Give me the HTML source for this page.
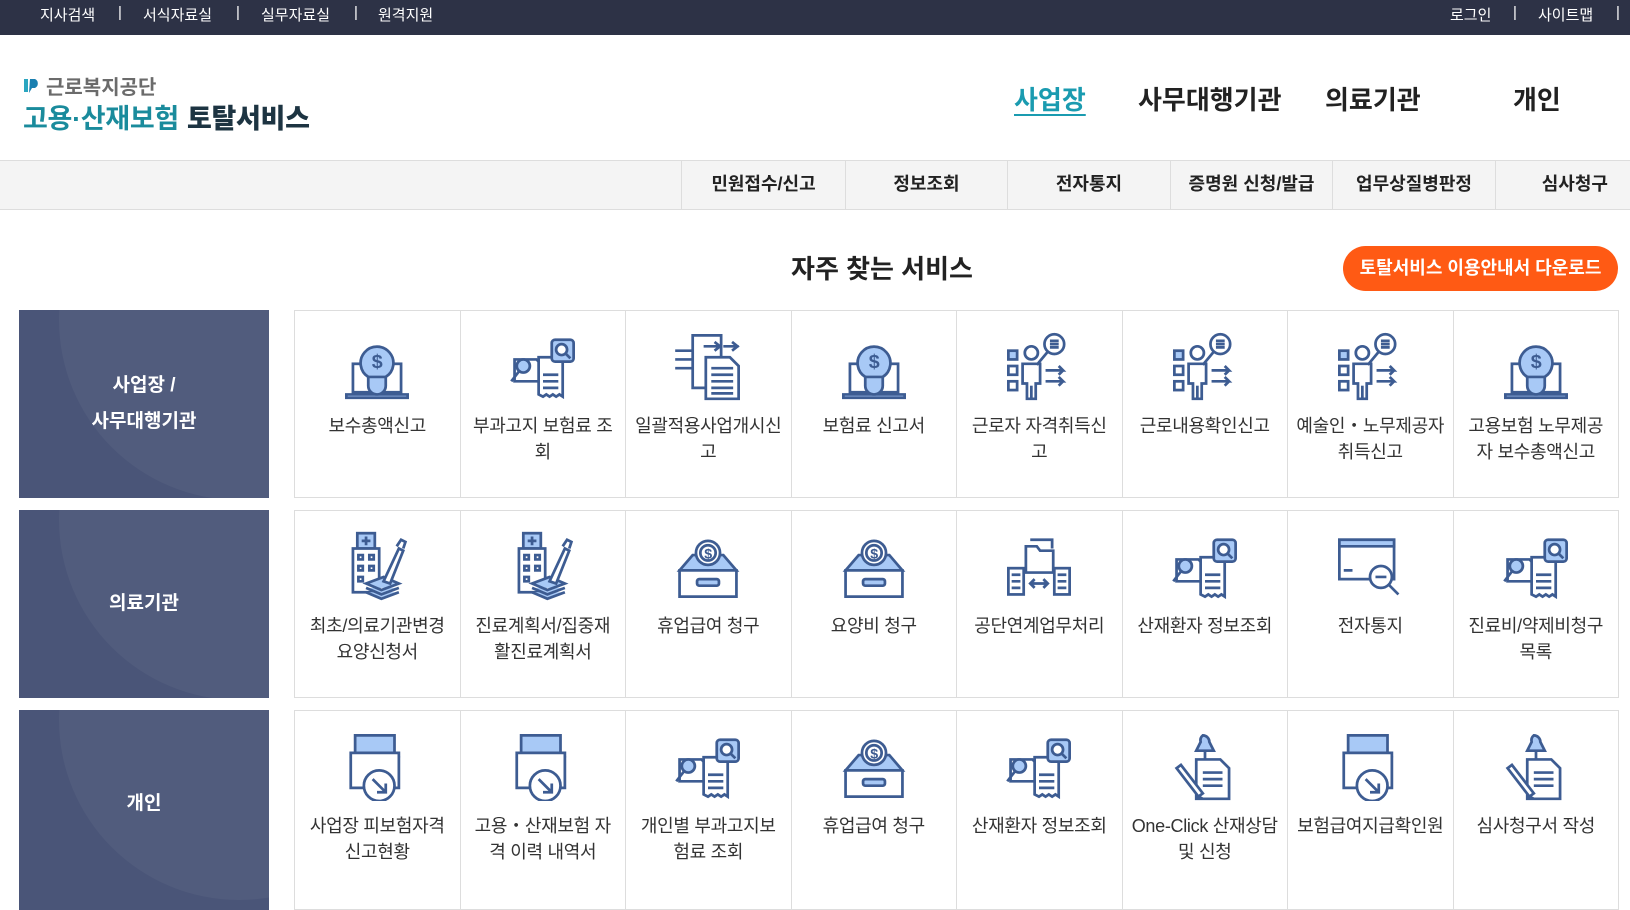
<!DOCTYPE html>
<html><head><meta charset="utf-8">
<style>
*{margin:0;padding:0;box-sizing:border-box}
body{width:1630px;height:868px;overflow:hidden;background:#fff;font-family:"Liberation Sans","Noto Sans CJK KR",sans-serif;color:#333;position:relative}
.top{position:absolute;left:0;top:0;width:1630px;height:35px;background:#2d3246;color:#fff;font-size:15px}
.top span{position:absolute;top:4px}
.logo1{position:absolute;left:46px;top:71px;font-size:20px;font-weight:bold;color:#6b6b6b}
.logo2{position:absolute;left:23px;top:97px;font-size:27px;font-weight:bold;color:#1a8b9c;letter-spacing:-0.3px}
.logo2 b{color:#1d3442;margin-left:8px}
.nav{position:absolute;top:80px;font-size:26px;font-weight:bold;color:#222}
.sub{position:absolute;left:0;top:160px;width:1630px;height:50px;background:#f4f4f4;border-top:1px solid #ddd;border-bottom:1px solid #ddd}
.sub div{position:absolute;top:0;height:48px;line-height:46px;text-align:center;font-size:18px;font-weight:bold;color:#222;border-left:1px solid #ddd}
.title{position:absolute;left:0;width:1764px;text-align:center;top:249px;font-size:26px;font-weight:bold;color:#222}
.btn{position:absolute;left:1343px;top:246px;width:275px;height:45px;border-radius:23px;background:#ff5a14;color:#fff;font-size:18px;font-weight:bold;line-height:45px;text-align:center}
.panel{position:absolute;left:19px;width:250px;height:188px;background:#4a5578;overflow:hidden;color:#fff;font-size:19px;font-weight:bold;text-align:center;display:flex;align-items:center;justify-content:center;line-height:36px}
.panel:before{content:"";position:absolute;left:40px;top:-170px;width:360px;height:360px;border-radius:50%;background:rgba(255,255,255,0.045)}
.panel span{position:relative}
.grid{position:absolute;left:294px;width:1325px;height:188px;border:1px solid #ddd;display:flex}
.cell{flex:1;border-right:1px solid #ddd;text-align:center;padding-top:20px;font-size:18px;line-height:26px;color:#333;letter-spacing:-0.3px}
.cell:last-child{border-right:none}
.cell svg{display:block;margin:0 auto 12px;width:70px;height:70px}
</style></head><body>
<svg width="0" height="0" style="position:absolute">
<defs>
<g id="i1" fill="none" stroke="#3d5c92" stroke-width="2.5"><rect x="10" y="30" width="44" height="26" fill="#fff"/><path d="M4 58h56v3H4z" fill="#a8c9f6"/><path d="M24 42a15 15 0 1 1 16 0v8a8 8 0 0 1-16 0z" fill="#a8c9f6"/><path d="M24 42h16"/><text x="32" y="34" font-size="18" font-weight="bold" text-anchor="middle" fill="#3d5c92" stroke="none">$</text></g>
<g id="i2" fill="none" stroke="#3d5c92" stroke-width="2.5"><path d="M6 26h20l4 4v16H6z" fill="#fff"/><circle cx="14" cy="32" r="6" fill="#a8c9f6"/><path d="M10 37L3 46"/><path d="M28 24h22v36l-3-2-3 2-3-2-3 2-3-2-3 2-4-2z" fill="#fff"/><path d="M32 40h14M32 46h14M32 52h14"/><rect x="40" y="8" width="20" height="20" rx="3" fill="#a8c9f6"/><circle cx="49" cy="17" r="5" fill="#fff"/><path d="M53 21l4 4"/></g>
<g id="i3" fill="none" stroke="#3d5c92" stroke-width="2.5"><path d="M18 4h26v48H18z" fill="#fff"/><path d="M2 18h16M2 26h16M2 34h16M28 14h16M38 10l5 4-5 4M46 14h14M54 10l5 4-5 4"/><path d="M30 24h22l8 8v30H30z" fill="#fff"/><path d="M35 34h20M35 40h20M35 46h20M35 52h20M35 57h20"/></g>
<g id="i4" fill="none" stroke="#3d5c92" stroke-width="2.5"><rect x="4" y="18" width="8" height="8" fill="#a8c9f6"/><rect x="4" y="32" width="8" height="8"/><rect x="4" y="46" width="8" height="8"/><circle cx="25" cy="20" r="6"/><path d="M17 30h16v18h-4v14h-8V48h-4z"/><path d="M25 50v12"/><circle cx="46" cy="12" r="9"/><path d="M42 9h8M42 12h8M42 15h8M40 19l-10 12"/><path d="M38 36h16l-4-4M54 36l-4 4M38 46h16l-4-4M54 46l-4 4"/></g>
<g id="i5" fill="none" stroke="#3d5c92" stroke-width="2.5"><rect x="14" y="2" width="16" height="14" fill="#a8c9f6"/><path d="M22 5v8M18 9h8"/><rect x="10" y="16" width="24" height="40" fill="#fff"/><path d="M15 22h4v4h-4zM25 22h4v4h-4zM15 32h4v4h-4zM25 32h4v4h-4zM15 42h4v4h-4z"/><path d="M22 48l16-6 14 6-16 6zM22 52l14 6 16-6M22 56l14 6 16-6" fill="#a8c9f6"/><path d="M38 46l14-30 4 2-12 30z" fill="#fff"/><path d="M50 14l4-6 4 2-2 6"/></g>
<g id="i6" fill="none" stroke="#3d5c92" stroke-width="2.5"><path d="M6 36l12-14h28l12 14z" fill="#a8c9f6"/><circle cx="32" cy="20" r="11" fill="#fff"/><circle cx="32" cy="20" r="7"/><text x="32" y="25" font-size="13" font-weight="bold" text-anchor="middle" fill="#3d5c92" stroke="none">$</text><rect x="6" y="36" width="52" height="24" fill="#fff"/><rect x="22" y="44" width="20" height="6" rx="2" fill="#a8c9f6"/></g>
<g id="i7" fill="none" stroke="#3d5c92" stroke-width="2.5"><path d="M20 14h10l3 4h12v20H20z" fill="#fff"/><path d="M24 8h20v8"/><rect x="4" y="34" width="14" height="24" fill="#fff"/><rect x="46" y="34" width="14" height="24" fill="#fff"/><path d="M7 40h8M7 46h8M7 52h8M49 40h8M49 46h8M49 52h8"/><path d="M24 48h16M28 44l-4 4 4 4M36 44l4 4-4 4" fill="#a8c9f6"/></g>
<g id="i8" fill="none" stroke="#3d5c92" stroke-width="2.5"><rect x="4" y="8" width="50" height="36" fill="#fff"/><path d="M4 8h50v6H4z" fill="#a8c9f6"/><path d="M8 36h8"/><circle cx="42" cy="42" r="10" fill="#fff"/><path d="M37 42h10M49 49l9 9"/></g>
<g id="i9" fill="none" stroke="#3d5c92" stroke-width="2.5"><rect x="12" y="4" width="36" height="24" fill="#a8c9f6"/><path d="M8 24a3 3 0 0 1 6 0M46 24a3 3 0 0 1 6 0"/><path d="M8 20h44v32H8z" fill="#fff"/><circle cx="34" cy="50" r="14" fill="#fff"/><path d="M28 44l12 12M40 48v8h-8"/></g>
<g id="i10" fill="none" stroke="#3d5c92" stroke-width="2.5"><path d="M30 4a6 6 0 0 1 6 6l4 8H24l4-8a6 6 0 0 1 2-6z" fill="#a8c9f6"/><path d="M32 18v14"/><path d="M24 26h22l8 8v28H24z" fill="#fff"/><path d="M30 38h18M30 44h18M30 50h18"/><path d="M6 34l4-3 20 26-4 3z" fill="#fff"/><path d="M26 60l4 2"/></g>
</defs></svg>

<div class="top">
<span style="left:40px">지사검색</span><span style="left:118px">|</span>
<span style="left:143px">서식자료실</span><span style="left:236px">|</span>
<span style="left:261px">실무자료실</span><span style="left:354px">|</span>
<span style="left:378px">원격지원</span>
<span style="left:1450px">로그인</span><span style="left:1513px">|</span>
<span style="left:1538px">사이트맵</span><span style="left:1616px">|</span>
</div>

<svg style="position:absolute;left:23px;top:77px" width="18" height="17" viewBox="0 0 18 17"><path d="M1 2h4v13H1z" fill="#2aa6c0"/><path d="M7 2h5a5 5 0 0 1 0 9H9l-3 5z" fill="#1a7fb0"/></svg>
<div class="logo1">근로복지공단</div>
<div class="logo2">고용·산재보험<b>토탈서비스</b></div>

<div class="nav" style="left:1014px;color:#1a9bb0;text-decoration:underline;text-underline-offset:5px">사업장</div>
<div class="nav" style="left:1138px">사무대행기관</div>
<div class="nav" style="left:1325px">의료기관</div>
<div class="nav" style="left:1513px">개인</div>

<div class="sub">
<div style="left:681px;width:164px">민원접수/신고</div>
<div style="left:845px;width:162px">정보조회</div>
<div style="left:1007px;width:163px">전자통지</div>
<div style="left:1170px;width:162px">증명원 신청/발급</div>
<div style="left:1332px;width:163px">업무상질병판정</div>
<div style="left:1495px;width:135px;text-align:right;padding-right:22px">심사청구</div>
</div>

<div class="title">자주 찾는 서비스</div>
<div class="btn">토탈서비스 이용안내서 다운로드</div>

<div class="panel" style="top:310px"><span>사업장 /<br>사무대행기관</span></div>
<div class="grid" style="top:310px">
<div class="cell"><svg viewBox="0 0 64 64"><use href="#i1"/></svg>보수총액신고</div>
<div class="cell"><svg viewBox="0 0 64 64"><use href="#i2"/></svg>부과고지 보험료 조<br>회</div>
<div class="cell"><svg viewBox="0 0 64 64"><use href="#i3"/></svg>일괄적용사업개시신<br>고</div>
<div class="cell"><svg viewBox="0 0 64 64"><use href="#i1"/></svg>보험료 신고서</div>
<div class="cell"><svg viewBox="0 0 64 64"><use href="#i4"/></svg>근로자 자격취득신<br>고</div>
<div class="cell"><svg viewBox="0 0 64 64"><use href="#i4"/></svg>근로내용확인신고</div>
<div class="cell"><svg viewBox="0 0 64 64"><use href="#i4"/></svg>예술인・노무제공자<br>취득신고</div>
<div class="cell"><svg viewBox="0 0 64 64"><use href="#i1"/></svg>고용보험 노무제공<br>자 보수총액신고</div>
</div>

<div class="panel" style="top:510px"><span>의료기관</span></div>
<div class="grid" style="top:510px">
<div class="cell"><svg viewBox="0 0 64 64"><use href="#i5"/></svg>최초/의료기관변경<br>요양신청서</div>
<div class="cell"><svg viewBox="0 0 64 64"><use href="#i5"/></svg>진료계획서/집중재<br>활진료계획서</div>
<div class="cell"><svg viewBox="0 0 64 64"><use href="#i6"/></svg>휴업급여 청구</div>
<div class="cell"><svg viewBox="0 0 64 64"><use href="#i6"/></svg>요양비 청구</div>
<div class="cell"><svg viewBox="0 0 64 64"><use href="#i7"/></svg>공단연계업무처리</div>
<div class="cell"><svg viewBox="0 0 64 64"><use href="#i2"/></svg>산재환자 정보조회</div>
<div class="cell"><svg viewBox="0 0 64 64"><use href="#i8"/></svg>전자통지</div>
<div class="cell"><svg viewBox="0 0 64 64"><use href="#i2"/></svg>진료비/약제비청구<br>목록</div>
</div>

<div class="panel" style="top:710px;height:200px"><span style="top:-6px">개인</span></div>
<div class="grid" style="top:710px;height:200px">
<div class="cell"><svg viewBox="0 0 64 64"><use href="#i9"/></svg>사업장 피보험자격<br>신고현황</div>
<div class="cell"><svg viewBox="0 0 64 64"><use href="#i9"/></svg>고용・산재보험 자<br>격 이력 내역서</div>
<div class="cell"><svg viewBox="0 0 64 64"><use href="#i2"/></svg>개인별 부과고지보<br>험료 조회</div>
<div class="cell"><svg viewBox="0 0 64 64"><use href="#i6"/></svg>휴업급여 청구</div>
<div class="cell"><svg viewBox="0 0 64 64"><use href="#i2"/></svg>산재환자 정보조회</div>
<div class="cell"><svg viewBox="0 0 64 64"><use href="#i10"/></svg>One-Click 산재상담<br>및 신청</div>
<div class="cell"><svg viewBox="0 0 64 64"><use href="#i9"/></svg>보험급여지급확인원</div>
<div class="cell"><svg viewBox="0 0 64 64"><use href="#i10"/></svg>심사청구서 작성</div>
</div>
</body></html>
